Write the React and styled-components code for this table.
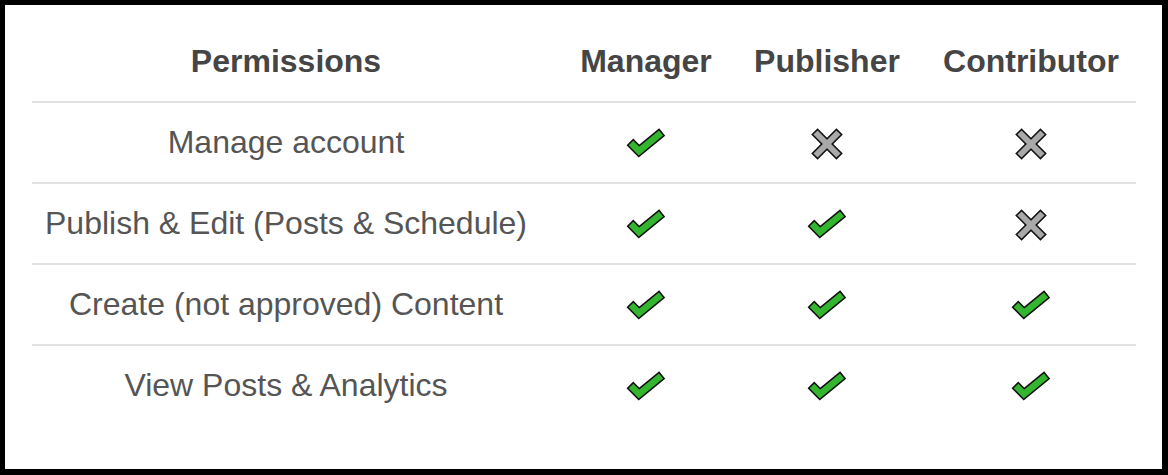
import React from "react";
import styled, { createGlobalStyle } from "styled-components";

const GlobalStyle = createGlobalStyle`
  html, body {
    margin: 0;
    padding: 0;
    background: #000;
  }
  * {
    box-sizing: border-box;
  }
`;

const rows = [
  { label: "Manage account", access: [true, false, false] },
  { label: "Publish & Edit (Posts & Schedule)", access: [true, true, false] },
  { label: "Create (not approved) Content", access: [true, true, true] },
  { label: "View Posts & Analytics", access: [true, true, true] },
];

const roles = ["Manager", "Publisher", "Contributor"];

// green tick with a dark outline: the dark stroke sits under a narrower green one
const CheckIcon = () => (
  <svg width="36" height="28" viewBox="0 0 36 28" style={{ overflow: "visible" }}>
    <polyline
      points="1.9,11.9 11,21 34.2,2"
      fill="none"
      stroke="#111"
      strokeWidth="9.5"
      strokeLinejoin="miter"
      strokeLinecap="butt"
    />
    <polyline
      points="3,13 11,21 33,3"
      fill="none"
      stroke="#33b52f"
      strokeWidth="6.5"
      strokeLinejoin="miter"
      strokeLinecap="butt"
    />
  </svg>
);

const CrossIcon = () => (
  <svg width="32" height="32" viewBox="0 0 32 32" style={{ overflow: "visible" }}>
    <line x1="3.4" y1="3.4" x2="28.6" y2="28.6" stroke="#111" strokeWidth="9" />
    <line x1="28.6" y1="3.4" x2="3.4" y2="28.6" stroke="#111" strokeWidth="9" />
    <line x1="4.5" y1="4.5" x2="27.5" y2="27.5" stroke="#a9a9a9" strokeWidth="6" />
    <line x1="27.5" y1="4.5" x2="4.5" y2="27.5" stroke="#a9a9a9" strokeWidth="6" />
  </svg>
);

const App = () => {
  return (
    <>
      <GlobalStyle />
      <Frame>
        <Table>
          <Row $header>
            <Cell $col={0}>
              <HeadText>Permissions</HeadText>
            </Cell>
            {roles.map((role, i) => (
              <Cell key={role} $col={i + 1}>
                <HeadText>{role}</HeadText>
              </Cell>
            ))}
          </Row>
          {rows.map((row, r) => (
            <Row key={row.label} $last={r === rows.length - 1}>
              <Cell $col={0}>
                <BodyText>{row.label}</BodyText>
              </Cell>
              {row.access.map((ok, i) => (
                <Cell key={i} $col={i + 1}>
                  <IconBox>{ok ? <CheckIcon /> : <CrossIcon />}</IconBox>
                </Cell>
              ))}
            </Row>
          ))}
        </Table>
      </Frame>
    </>
  );
};

const Frame = styled.div`
  width: 1168px;
  height: 475px;
  background: #fff;
  border: 5px solid #000;
  border-right-width: 6px;
  border-bottom-width: 6px;
  padding: 17px 0 0 27px;
`;

const Table = styled.div`
  width: 1104px;
  display: flex;
  flex-direction: column;
`;

const Row = styled.div`
  display: grid;
  grid-template-columns: 508px 212px 150px 234px;
  height: ${({ $last }) => ($last ? "79px" : "81px")};
  border-bottom: ${({ $last }) => ($last ? "none" : "2px solid #e1e1e1")};
`;

const Cell = styled.div`
  display: flex;
  align-items: center;
  justify-content: center;
  padding-left: ${({ $col }) => ($col === 3 ? "24px" : "0")};
`;

const HeadText = styled.span`
  font-family: "Liberation Sans", Arial, sans-serif;
  font-weight: 700;
  font-size: 32px;
  color: #454545;
  white-space: nowrap;
`;

const BodyText = styled.span`
  font-family: "Liberation Sans", Arial, sans-serif;
  font-weight: 400;
  font-size: 32px;
  color: #555;
  white-space: nowrap;
`;

const IconBox = styled.div`
  display: flex;
  align-items: center;
  justify-content: center;
  width: 36px;
  height: 32px;
  margin-top: 3px;
`;

export default App;
